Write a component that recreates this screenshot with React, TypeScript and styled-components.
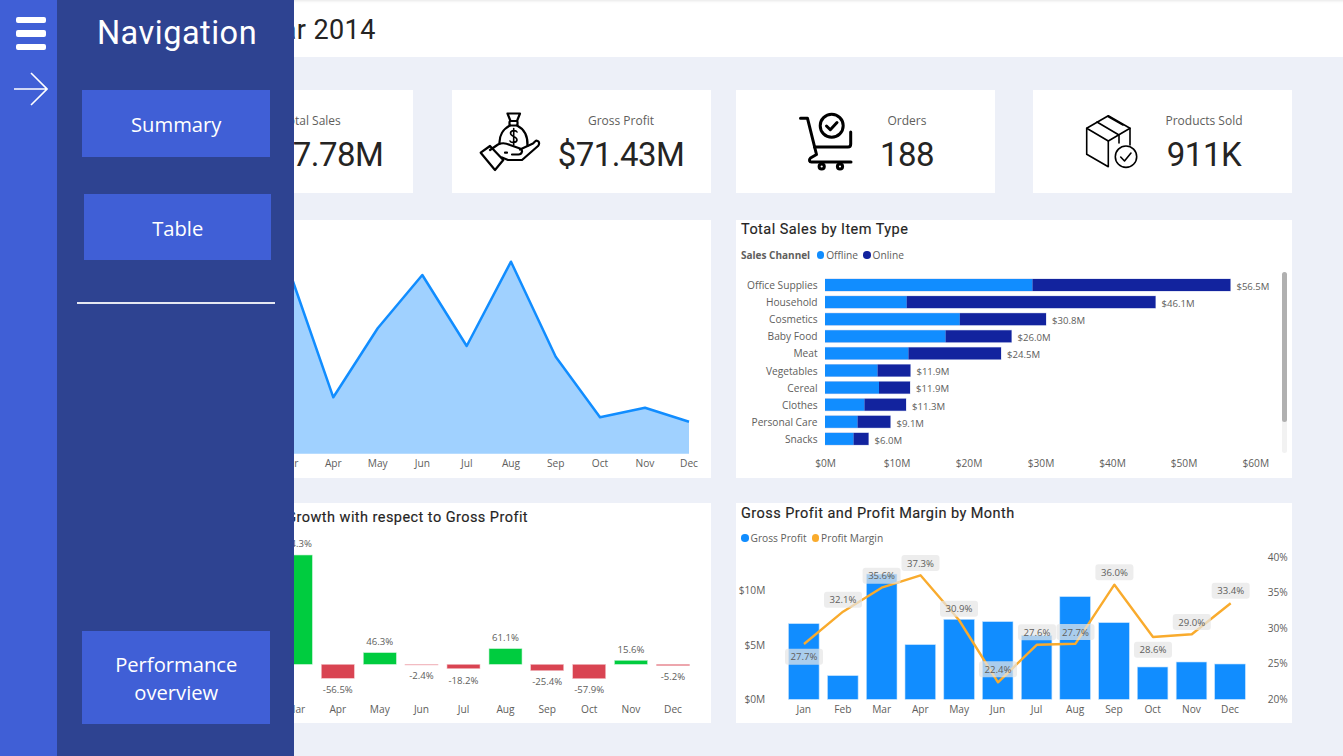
import React from 'react';
import styled, { createGlobalStyle } from 'styled-components';

const DIN = '"Roboto", "Liberation Sans", sans-serif';
const SEGOE = '"Open Sans", "Noto Sans", sans-serif';

const GlobalStyle = createGlobalStyle`
  html, body {
    margin: 0;
    padding: 0;
    background: #edf0f8;
    overflow: hidden;
  }
`;

const Page = styled.div`
  position: relative;
  width: 1343px;
  height: 756px;
  overflow: hidden;
  background: #edf0f8;
`;

// Sidebar
const Rail = styled.div`
  position: absolute;
  top: 0;
  left: 0;
  bottom: 0;
  width: 57px;
  background: #405fd6;
  display: flex;
  flex-direction: column;
  align-items: flex-start;
  padding: 17px 0 0 14px;
  box-sizing: border-box;
`;

const Burger = styled.div`
  width: 30px;
  margin-left: 2px;
  display: flex;
  flex-direction: column;
  gap: 7px;
`;

const BurgerBar = styled.span`
  display: block;
  height: 6.3px;
  border-radius: 2px;
  background: #fff;
`;

const ArrowIcon = styled.svg`
  display: block;
  margin-top: 22px;
`;

const Drawer = styled.div`
  position: absolute;
  top: 0;
  left: 57px;
  bottom: 0;
  width: 237px;
  background: #2e4391;
  display: flex;
  flex-direction: column;
  align-items: flex-start;
  box-sizing: border-box;
  padding: 0 0 32.5px 25px;
`;

const DrawerTitle = styled.div`
  align-self: stretch;
  margin-left: -22px;
  height: 90px;
  padding-top: 12px;
  box-sizing: border-box;
  text-align: center;
  color: #fff;
  font: 400 32.5px/42px ${DIN};
  letter-spacing: 0.5px;
`;

const NavButton = styled.div<{ $height: number; $shift?: number; $bottom?: boolean }>`
  width: 187.5px;
  height: ${p => p.$height}px;
  margin-left: ${p => p.$shift ?? 0}px;
  margin-top: ${p => (p.$bottom ? 'auto' : '0')};
  padding: 2px 0 0 1px;
  box-sizing: border-box;
  background: #405fd6;
  color: #fff;
  display: flex;
  align-items: center;
  justify-content: center;
  text-align: center;
  font: 400 20.2px/28px ${SEGOE};
`;

const TableButton = styled(NavButton)`
  margin-top: 37.5px;
`;

const Divider = styled.div`
  width: 198px;
  height: 1.5px;
  margin: 42px 0 0 -5px;
  background: #e4e7f2;
`;

// Main content
const TopBar = styled.header`
  height: 57px;
  background: #fff;
  box-shadow: inset 0 4px 3px -3px rgba(0, 0, 0, 0.1);
  padding-left: 84px;
  box-sizing: border-box;
  color: #252423;
  font: 400 27px/60px ${DIN};
  letter-spacing: 0.4px;
`;

const KpiRow = styled.section`
  display: flex;
  height: 103px;
  margin: 33px 0 0 154px;
`;

const KpiCard = styled.div<{ $pad: number; $gap?: number }>`
  width: 259px;
  height: 103px;
  margin-left: ${p => p.$gap ?? 0}px;
  padding-left: ${p => p.$pad}px;
  box-sizing: border-box;
  background: #fff;
  display: flex;
`;

const KpiIcon = styled.svg<{ $top: number }>`
  display: block;
  flex: none;
  margin-top: ${p => p.$top}px;
`;

const KpiText = styled.div<{ $width: number }>`
  width: ${p => p.$width}px;
  display: flex;
  flex-direction: column;
  align-items: center;
  white-space: nowrap;
  padding-top: 22px;
`;

const KpiLabel = styled.div`
  font: 400 12px/18px ${SEGOE};
  color: #605e5c;
`;

const KpiValue = styled.div`
  margin-top: 5px;
  font: 400 33px/40px ${DIN};
  color: #252423;
  letter-spacing: -0.5px;
`;

const ChartRow = styled.section<{ $top: number; $height: number }>`
  display: flex;
  gap: 25px;
  height: ${p => p.$height}px;
  margin: ${p => p.$top}px 0 0 154px;
`;

const ChartCard = styled.div<{ $width: number }>`
  position: relative;
  width: ${p => p.$width}px;
  background: #fff;
  display: flex;
  flex-direction: column;
  overflow: hidden;
`;

const ChartTitle = styled.div<{ $height: number; $left: number }>`
  height: ${p => p.$height}px;
  padding: 1px 0 0 ${p => p.$left}px;
  box-sizing: border-box;
  flex: none;
  white-space: nowrap;
  color: #252423;
  font: 400 14.5px/${p => p.$height}px ${DIN};
  letter-spacing: 0.45px;
  -webkit-text-stroke: 0.15px #252423;
`;

const Legend = styled.div<{ $top: number }>`
  height: 20px;
  flex: none;
  margin-top: ${p => p.$top}px;
  padding-left: 5px;
  display: flex;
  align-items: center;
  gap: 2px;
  font: 400 10.2px/20px ${SEGOE};
  color: #605e5c;
`;

const LegendName = styled.span`
  font-size: 10px;
  font-weight: 700;
  margin-right: 4.5px;
`;

const LegendDot = styled.i<{ $color: string; $gap?: number }>`
  width: 7.5px;
  height: 7.5px;
  border-radius: 50%;
  margin-left: ${p => p.$gap ?? 0}px;
  background: ${p => p.$color};
`;

const ChartSvg = styled.svg`
  display: block;
  flex: 1;
  min-height: 0;
  width: 100%;
`;

const AxisText = styled.text`
  font: 400 10.2px ${SEGOE};
  fill: #605e5c;
  dominant-baseline: central;
`;

const DataText = styled(AxisText)`
  font-size: 9.6px;
`;

const ScrollTrack = styled.div`
  position: absolute;
  left: 546px;
  top: 52px;
  width: 5px;
  height: 181px;
  border-radius: 3px;
  background: #f2f2f2;
`;

const ScrollThumb = styled.div`
  width: 100%;
  height: 150px;
  border-radius: 3px;
  background: #b0b0b0;
`;

const MONTHS = ['Jan', 'Feb', 'Mar', 'Apr', 'May', 'Jun', 'Jul', 'Aug', 'Sep', 'Oct', 'Nov', 'Dec'];

const AREA_POINTS: [number, number][] = [
  [200, 300], [244.6, 330], [289, 270], [333.3, 397.3], [377.7, 328.3], [422.3, 275],
  [466.7, 346], [511, 261.7], [555.7, 356.7], [600, 417.3], [645, 407.7], [689, 421.7],
];

const ITEMS = [
  { name: 'Office Supplies', split: 1032.5, end: 1230.4, label: '$56.5M' },
  { name: 'Household', split: 906.7, end: 1155.5, label: '$46.1M' },
  { name: 'Cosmetics', split: 959.8, end: 1046, label: '$30.8M' },
  { name: 'Baby Food', split: 945.6, end: 1011.5, label: '$26.0M' },
  { name: 'Meat', split: 908.5, end: 1001, label: '$24.5M' },
  { name: 'Vegetables', split: 877.6, end: 910.4, label: '$11.9M' },
  { name: 'Cereal', split: 879, end: 910, label: '$11.9M' },
  { name: 'Clothes', split: 864.5, end: 906, label: '$11.3M' },
  { name: 'Personal Care', split: 857.6, end: 890.4, label: '$9.1M' },
  { name: 'Snacks', split: 853.6, end: 868.5, label: '$6.0M' },
];

const SALES_TICKS = [
  ['$0M', 825.6], ['$10M', 897], ['$20M', 969], ['$30M', 1041], ['$40M', 1112.5], ['$50M', 1184], ['$60M', 1255.8],
] as const;

const GROWTH = [
  { month: 'Jan', x: 195, edge: 664.3, label: '', labelY: 0 },
  { month: 'Feb', x: 237, edge: 664.3, label: '', labelY: 0 },
  { month: 'Mar', x: 279.3, edge: 555, label: '124.3%', labelY: 543.7 },
  { month: 'Apr', x: 321.3, edge: 678.3, label: '-56.5%', labelY: 689.7 },
  { month: 'May', x: 363.3, edge: 652.7, label: '46.3%', labelY: 641.3 },
  { month: 'Jun', x: 405, edge: 665, label: '-2.4%', labelY: 675.7 },
  { month: 'Jul', x: 447, edge: 668.7, label: '-18.2%', labelY: 680 },
  { month: 'Aug', x: 489, edge: 648.7, label: '61.1%', labelY: 637.3 },
  { month: 'Sep', x: 530.7, edge: 670.7, label: '-25.4%', labelY: 681.7 },
  { month: 'Oct', x: 572.7, edge: 678.7, label: '-57.9%', labelY: 689.7 },
  { month: 'Nov', x: 614.5, edge: 660.3, label: '15.6%', labelY: 649.7 },
  { month: 'Dec', x: 656.5, edge: 665.7, label: '-5.2%', labelY: 676.7 },
];

const PROFIT = [
  { x: 788.5, top: 623.7, px: 804, py: 644, ly: 656.7, label: '27.7%' },
  { x: 827.5, top: 675.7, px: 843, py: 611.7, ly: 599.7, label: '32.1%' },
  { x: 866.4, top: 574, px: 881.6, py: 587.7, ly: 575.7, label: '35.6%' },
  { x: 905, top: 644.7, px: 920.5, py: 575.3, ly: 563, label: '37.3%' },
  { x: 943.8, top: 619.3, px: 959, py: 620, ly: 608.7, label: '30.9%' },
  { x: 982.4, top: 621.7, px: 998, py: 682.3, ly: 669.3, label: '22.4%' },
  { x: 1021.3, top: 635.3, px: 1037, py: 644.7, ly: 632.3, label: '27.6%' },
  { x: 1059.8, top: 596.7, px: 1075.5, py: 643.7, ly: 632, label: '27.7%' },
  { x: 1098.7, top: 622.7, px: 1114.4, py: 584.7, ly: 572.3, label: '36.0%' },
  { x: 1137.3, top: 667, px: 1153, py: 637, ly: 649.7, label: '28.6%' },
  { x: 1176.2, top: 662, px: 1191.8, py: 634.3, ly: 622, label: '29.0%' },
  { x: 1214.7, top: 664, px: 1230.7, py: 603.3, ly: 590.7, label: '33.4%' },
];

const PROFIT_LEFT = [['$10M', 590], ['$5M', 645], ['$0M', 699.3]] as const;
const PROFIT_RIGHT = [['40%', 556.7], ['35%', 592.3], ['30%', 627.7], ['25%', 663.3], ['20%', 699.3]] as const;

const MoneyIcon = () => (
  <KpiIcon $top={10} width="90" height="80" viewBox="0 0 90 80" fill="none" stroke="#000" strokeWidth="2.2" strokeLinecap="round" strokeLinejoin="round">
    <path d="M37.5 13.5 H50 L47 21 H40.5 Z" />
    <rect x="39.5" y="21" width="8" height="4.5" rx="1" />
    <path d="M40 25.5 C33 29 29 36 29.5 44" />
    <path d="M47 25.5 C54 29 58 36 57.5 46" />
    <path d="M47 32 C46 30 41 30 40.5 33 C40.5 37 47 36 47 40 C46.5 43 41 43 40 41 M43.7 28.5 V45" strokeWidth="1.6" />
    <path d="M10.7 52.7 L20 46 L33.3 60 L25 70 Z" />
    <path d="M20 50 L28 44.5 C32 42.5 36 43 40 45 L50 48.5 C53.5 50 52 54.5 48.5 54.5 H42 M35 52.7 H37" />
    <path d="M50 49.5 L63 43.5 L65 41.5 C68 39 70.5 43 68 46 L52 60 H38 L32 57.5" />
  </KpiIcon>
);

const CartIcon = () => (
  <KpiIcon $top={15} width="75" height="70" viewBox="0 0 75 70" fill="none" stroke="#000" strokeWidth="3" strokeLinecap="round" strokeLinejoin="round">
    <path d="M10.5 13.3 H17.5 L26.5 49.5 L20.5 53 C18.5 55 19.5 57 21.5 57 H61" />
    <circle cx="41.7" cy="20.7" r="11.5" />
    <path d="M36.5 21 L40.3 24.7 L47 17.5" />
    <path d="M60.7 27 V39 C60.7 41 59.5 42 58 42 H24.5" />
    <circle cx="31.7" cy="61.5" r="2.6" />
    <circle cx="50" cy="61.5" r="2.6" />
  </KpiIcon>
);

const BoxIcon = () => (
  <KpiIcon $top={15} width="75" height="70" viewBox="0 0 75 70" fill="none" stroke="#000" strokeWidth="1.6" strokeLinecap="round" strokeLinejoin="round">
    <path d="M33.3 10.7 L55 23.3 L33.3 36 L11.7 23.3 Z" />
    <path d="M11.7 23.3 V49.3 L33.3 61.7 V36 M55 23.3 V40" />
    <path d="M22 17 L44 30 V38 M33 11.5 L48 20" />
    <circle cx="51" cy="51.7" r="10.7" fill="#fff" />
    <path d="M45.7 52 L49.5 56 L56 48" />
  </KpiIcon>
);

const AreaChart = () => {
  const line = AREA_POINTS.map(([x, y]) => `${x},${y}`).join(' ');
  return (
    <ChartSvg viewBox="154 220 557 258">
      <polygon points={`200,453.7 ${line} 689,453.7`} fill="#a0d1ff" />
      <polyline points={line} fill="none" stroke="#118dff" strokeWidth="2.5" strokeLinejoin="round" />
      {AREA_POINTS.map(([x], i) => (
        <AxisText key={MONTHS[i]} x={x} y={463} textAnchor="middle">{MONTHS[i]}</AxisText>
      ))}
    </ChartSvg>
  );
};

const ItemTypeChart = () => (
  <ChartSvg viewBox="736 265 556 213">
    {ITEMS.map((item, i) => {
      const cy = 285 + i * 17.1;
      return (
        <g key={item.name}>
          <AxisText x={817.6} y={cy} textAnchor="end">{item.name}</AxisText>
          <rect x={825} y={cy - 6.5} width={item.end - 824.5} height={13} fill="#c9d0ec" />
          <rect x={825} y={cy - 6} width={item.split - 825} height={12} fill="#118dff" />
          <rect x={item.split} y={cy - 6} width={item.end - item.split} height={12} fill="#12239e" />
          <DataText x={item.end + 6} y={cy + 1.3}>{item.label}</DataText>
        </g>
      );
    })}
    {SALES_TICKS.map(([label, x]) => (
      <AxisText key={label} x={x} y={463} textAnchor="middle">{label}</AxisText>
    ))}
  </ChartSvg>
);

const GrowthChart = () => (
  <ChartSvg viewBox="154 531 557 192">
    {GROWTH.map(g => {
      const up = g.edge < 664.3;
      const y = up ? g.edge : 664.3;
      const h = Math.abs(g.edge - 664.3);
      const cx = g.x + 16.5;
      return (
        <g key={g.month}>
          <rect
            x={g.x}
            y={y}
            width={33}
            height={h}
            fill={up ? '#00cc3f' : '#d94452'}
            stroke={up ? '#bdf0cc' : '#f3c4c9'}
            strokeWidth={h > 0 ? 0.6 : 0}
          />
          {g.label && <DataText x={cx} y={g.labelY} textAnchor="middle">{g.label}</DataText>}
          <AxisText x={cx} y={708.7} textAnchor="middle">{g.month}</AxisText>
        </g>
      );
    })}
  </ChartSvg>
);

const ProfitChart = () => (
  <ChartSvg viewBox="736 548 556 175">
    {PROFIT_LEFT.map(([label, y]) => (
      <AxisText key={label} x={765.3} y={y} textAnchor="end">{label}</AxisText>
    ))}
    {PROFIT_RIGHT.map(([label, y]) => (
      <AxisText key={label} x={1287.8} y={y} textAnchor="end">{label}</AxisText>
    ))}
    {PROFIT.map((p, i) => (
      <g key={MONTHS[i]}>
        <rect x={p.x} y={p.top} width={30.6} height={699.3 - p.top} fill="#118dff" stroke="#bcdfff" strokeWidth={0.6} />
        <AxisText x={p.x + 15.3} y={708.7} textAnchor="middle">{MONTHS[i]}</AxisText>
      </g>
    ))}
    <polyline points={PROFIT.map(p => `${p.px},${p.py}`).join(' ')} fill="none" stroke="#f9ab2d" strokeWidth="2.4" strokeLinejoin="round" />
    {PROFIT.map((p, i) => (
      <g key={`${MONTHS[i]}-label`}>
        <rect x={p.px - 19} y={p.ly - 8} width={38} height={16} rx={3} fill="#e6e6e6" fillOpacity={0.72} />
        <DataText x={p.px} y={p.ly} textAnchor="middle">{p.label}</DataText>
      </g>
    ))}
  </ChartSvg>
);

const App: React.FC = () => (
  <Page>
    <GlobalStyle />
    <TopBar>Summary for Year 2014</TopBar>
    <KpiRow>
      <KpiCard $pad={85}>
        <KpiText $width={144}>
          <KpiLabel>Total Sales</KpiLabel>
          <KpiValue>$137.78M</KpiValue>
        </KpiText>
      </KpiCard>
      <KpiCard $pad={18} $gap={39}>
        <MoneyIcon />
        <KpiText $width={122}>
          <KpiLabel>Gross Profit</KpiLabel>
          <KpiValue>$71.43M</KpiValue>
        </KpiText>
      </KpiCard>
      <KpiCard $pad={54} $gap={25}>
        <CartIcon />
        <KpiText $width={84}>
          <KpiLabel>Orders</KpiLabel>
          <KpiValue>188</KpiValue>
        </KpiText>
      </KpiCard>
      <KpiCard $pad={42} $gap={38}>
        <BoxIcon />
        <KpiText $width={108}>
          <KpiLabel>Products Sold</KpiLabel>
          <KpiValue>911K</KpiValue>
        </KpiText>
      </KpiCard>
    </KpiRow>
    <ChartRow $top={27} $height={258}>
      <ChartCard $width={557}>
        <AreaChart />
      </ChartCard>
      <ChartCard $width={556}>
        <ChartTitle $height={18} $left={5}>Total Sales by Item Type</ChartTitle>
        <Legend $top={7}>
          <LegendName>Sales Channel</LegendName>
          <LegendDot $color="#118dff" />
          <span>Offline</span>
          <LegendDot $color="#12239e" $gap={3} />
          <span>Online</span>
        </Legend>
        <ItemTypeChart />
        <ScrollTrack>
          <ScrollThumb />
        </ScrollTrack>
      </ChartCard>
    </ChartRow>
    <ChartRow $top={25} $height={220}>
      <ChartCard $width={557}>
        <ChartTitle $height={28} $left={73}>Monthly Growth with respect to Gross Profit</ChartTitle>
        <GrowthChart />
      </ChartCard>
      <ChartCard $width={556}>
        <ChartTitle $height={20} $left={5}>Gross Profit and Profit Margin by Month</ChartTitle>
        <Legend $top={5}>
          <LegendDot $color="#118dff" />
          <span>Gross Profit</span>
          <LegendDot $color="#f9ab2d" $gap={3} />
          <span>Profit Margin</span>
        </Legend>
        <ProfitChart />
      </ChartCard>
    </ChartRow>
    <Rail>
      <Burger>
        <BurgerBar />
        <BurgerBar />
        <BurgerBar />
      </Burger>
      <ArrowIcon width="34" height="34" viewBox="0 0 34 34" fill="none" stroke="#fff" strokeWidth="1.6">
        <path d="M0 17 H32.5 M17 1 L33 17 L17 33" />
      </ArrowIcon>
    </Rail>
    <Drawer>
      <DrawerTitle>Navigation</DrawerTitle>
      <NavButton $height={66.5}>Summary</NavButton>
      <TableButton $height={66} $shift={1.5}>Table</TableButton>
      <Divider />
      <NavButton $height={92.5} $bottom>Performance<br />overview</NavButton>
    </Drawer>
  </Page>
);

export default App;
